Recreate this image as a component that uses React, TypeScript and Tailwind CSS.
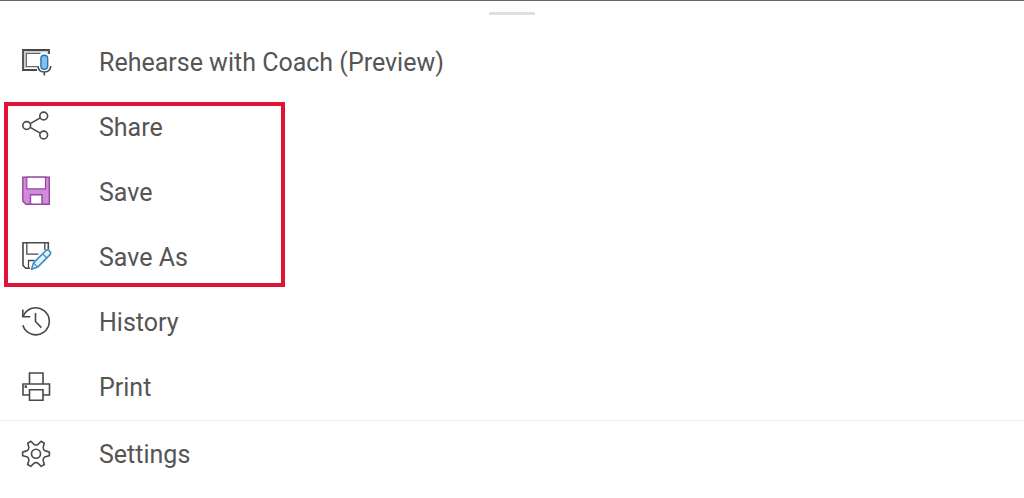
import type { ReactNode } from "react";

function Icon({ children }: { children: ReactNode }) {
  return (
    <svg
      viewBox="0 0 32 32"
      className="size-8 shrink-0"
      fill="none"
      stroke="#484848"
      strokeWidth="1.6"
      aria-hidden="true"
    >
      {children}
    </svg>
  );
}

const RehearseIcon = () => (
  <Icon>
    <path d="M4.5 22.5V5.5H27.5V8" stroke="#d0d0d0" strokeWidth="2" />
    <path d="M17 24H3V4H29V8" strokeWidth="1.8" />
    <path d="M17 20.6H6.3V7.3H20.5" stroke="#666" strokeWidth="1.3" />
    <rect x="20.9" y="9.3" width="6.8" height="14" rx="3.4" fill="#7fc0ee" stroke="#2673b0" strokeWidth="1.4" />
    <path d="M17.9 20C18.2 24 20.8 26 24.3 26S30.5 24 30.8 20M24.3 26V29.5" />
  </Icon>
);

const ShareIcon = () => (
  <Icon>
    <circle cx="6.7" cy="14.5" r="3.9" />
    <circle cx="23.7" cy="5" r="3.9" />
    <circle cx="23.7" cy="24" r="3.9" />
    <path d="M10.2 12.6L20.3 6.9M10.2 16.4L20.3 22.1" />
  </Icon>
);

const SaveIcon = () => (
  <Icon>
    <path d="M2.8 1.2H29.3V28.3H6L2.8 25.2Z" fill="#d28adb" stroke="#95479f" strokeWidth="1.4" />
    <path d="M6.8 1.2H25.5V12.8H6.8Z" fill="#fff" stroke="#95479f" strokeWidth="1.2" />
    <path d="M10.5 28.3V18.7H22V28.3Z" fill="#fff" stroke="#95479f" strokeWidth="1.4" />
  </Icon>
);

const SaveAsIcon = () => (
  <Icon>
    <path d="M28.3 8.5V1.8H3V24.5L5.8 27.3H10" />
    <path d="M6.8 2V13.2H18.5M24.8 2V9" strokeWidth="1.3" />
    <path d="M8.5 27V19.5H14.5" strokeWidth="1.3" />
    <path
      d="M11.5 28.2L13.5 21.9L25.4 10A2.9 2.9 0 0 1 29.6 14.1L17.7 26.1Z"
      fill="#e3f3fc"
      stroke="#3a8fc0"
      strokeLinejoin="round"
    />
    <path d="M13.5 21.9L17.7 26.1M22.6 12.8L26.8 17" stroke="#3a8fc0" strokeWidth="1.2" />
  </Icon>
);

const HistoryIcon = () => (
  <Icon>
    <path d="M3.1 10.7A13.5 13.5 0 1 1 2.9 19.2" />
    <path d="M2.8 3.5V10.8H10.2" />
    <path d="M15.5 7V15.5L21.4 21.6" />
  </Icon>
);

const PrintIcon = () => (
  <Icon>
    <path d="M9.5 13V2H23V13" />
    <path d="M9.5 24H3V13H29.5V24H23" />
    <path d="M9.5 18.8H23V29.3H9.5Z" />
    <circle cx="5.8" cy="15.7" r="1.4" fill="#484848" stroke="none" />
  </Icon>
);

const gearPoint = (radius: number, degrees: number) => {
  const a = (degrees * Math.PI) / 180;
  return `${(16 + radius * Math.cos(a)).toFixed(2)} ${(15.8 + radius * Math.sin(a)).toFixed(2)}`;
};

const gearPath =
  [0, 60, 120, 180, 240, 300]
    .map(
      (a, i) =>
        `${i === 0 ? "M" : "L"}${gearPoint(13.5, a - 8)}L${gearPoint(13.5, a + 8)}L${gearPoint(10.4, a + 15)}Q${gearPoint(8.6, a + 21)} ${gearPoint(8.9, a + 30)}Q${gearPoint(8.6, a + 39)} ${gearPoint(10.4, a + 45)}`,
    )
    .join("") + "Z";

const SettingsIcon = () => (
  <Icon>
    <path d={gearPath} strokeLinejoin="round" />
    <circle cx="16" cy="15.8" r="4.5" />
  </Icon>
);

function MenuItem({ icon, label }: { icon: ReactNode; label: string }) {
  return (
    <li>
      <button
        type="button"
        className="flex w-full items-start gap-[47px] px-5 py-4 text-left text-[25px] leading-[33px] text-[#555555]"
      >
        {icon}
        <span>{label}</span>
      </button>
    </li>
  );
}

export default function App() {
  return (
    <main className="border-t border-[#6e6561] bg-white font-['Roboto','Liberation_Sans',sans-serif]">
      <div className="mx-auto mt-[11px] mb-[15px] h-[3px] w-[46px] bg-[#e0dede]" />
      <nav aria-label="File actions">
        <ul>
          <MenuItem icon={<RehearseIcon />} label="Rehearse with Coach (Preview)" />
        </ul>
        <div className="relative">
          <ul>
            <MenuItem icon={<ShareIcon />} label="Share" />
            <MenuItem icon={<SaveIcon />} label="Save" />
            <MenuItem icon={<SaveAsIcon />} label="Save As" />
          </ul>
          <div className="pointer-events-none absolute top-[7px] bottom-[3px] left-1 w-[281px] border-4 border-[#e01235]" />
        </div>
        <ul>
          <MenuItem icon={<HistoryIcon />} label="History" />
          <MenuItem icon={<PrintIcon />} label="Print" />
        </ul>
        <ul className="border-t border-[#ececec] pt-px">
          <MenuItem icon={<SettingsIcon />} label="Settings" />
        </ul>
      </nav>
    </main>
  );
}
